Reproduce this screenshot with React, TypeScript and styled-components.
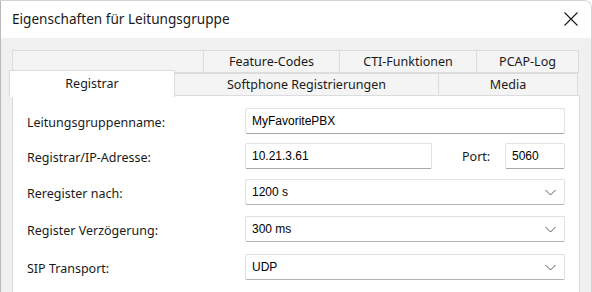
import styled, { createGlobalStyle } from "styled-components";

const GlobalStyle = createGlobalStyle`
    html, body {
        margin: 0;
        padding: 0;
        background: #ffffff;
    }
    body {
        font-family: "Noto Sans", "Open Sans", sans-serif;
        color: #1a1a1a;
    }
`;

const topTabs = [
    { label: "", w: 192 },
    { label: "Feature-Codes", w: 137 },
    { label: "CTI-Funktionen", w: 138 },
    { label: "PCAP-Log", w: 103 },
];

const bottomTabs = [
    { label: "Registrar", w: 163, active: true },
    { label: "Softphone Registrierungen", w: 265 },
    { label: "Media", w: 140 },
];

const Chevron = () => (
    <svg width="11" height="7" viewBox="0 0 11 7">
        <path d="M0.5 1 L5.5 6 L10.5 1" fill="none" stroke="#5c5c5c" strokeWidth="1" />
    </svg>
);

export default function App() {
    return (
        <>
            <GlobalStyle />
            <Window>
                <TitleBar>
                    <Title>Eigenschaften für Leitungsgruppe</Title>
                    <CloseBtn>
                        <svg width="14" height="14" viewBox="0 0 14 14">
                            <path d="M0.5 0.5 L13.5 13.5 M13.5 0.5 L0.5 13.5" stroke="#1a1a1a" strokeWidth="1.1" />
                        </svg>
                    </CloseBtn>
                </TitleBar>
                <DialogBody>
                    <TabStrip>
                        <TabRow>
                            {topTabs.map((t, i) => (
                                <Tab key={i} $w={t.w}>
                                    {t.label}
                                </Tab>
                            ))}
                        </TabRow>
                        <TabRow>
                            {bottomTabs.map((t) => (
                                <Tab key={t.label} $w={t.w} $active={t.active}>
                                    {t.label}
                                </Tab>
                            ))}
                        </TabRow>
                    </TabStrip>
                    <Panel>
                        <FormRow $mt={0}>
                            <FieldLabel>Leitungsgruppenname:</FieldLabel>
                            <TextBox $w={321}>MyFavoritePBX</TextBox>
                        </FormRow>
                        <FormRow $mt={9}>
                            <FieldLabel>Registrar/IP-Adresse:</FieldLabel>
                            <TextBox $w={187}>10.21.3.61</TextBox>
                            <PortLabel>Port:</PortLabel>
                            <TextBox $w={60}>5060</TextBox>
                        </FormRow>
                        <FormRow $mt={10}>
                            <FieldLabel>Reregister nach:</FieldLabel>
                            <ComboBox $w={321}>
                                <span>1200 s</span>
                                <Chevron />
                            </ComboBox>
                        </FormRow>
                        <FormRow $mt={11}>
                            <FieldLabel>Register Verzögerung:</FieldLabel>
                            <ComboBox $w={321}>
                                <span>300 ms</span>
                                <Chevron />
                            </ComboBox>
                        </FormRow>
                        <FormRow $mt={12}>
                            <FieldLabel>SIP Transport:</FieldLabel>
                            <ComboBox $w={321}>
                                <span>UDP</span>
                                <Chevron />
                            </ComboBox>
                        </FormRow>
                    </Panel>
                </DialogBody>
            </Window>
        </>
    );
}

const Window = styled.div`
    width: 592px;
    height: 292px;
    box-sizing: border-box;
    border-left: 1px solid #b9b9b9;
    border-top: 1px solid #d4d4d4;
    border-right: 1px solid #d4d4d4;
    border-top-right-radius: 8px;
    overflow: hidden;
    display: flex;
    flex-direction: column;
`;

const TitleBar = styled.div`
    height: 37px;
    flex: none;
    display: flex;
    align-items: center;
    justify-content: space-between;
    background: #ffffff;
    padding: 0 13px 0 11px;
`;

const Title = styled.div`
    font-size: 13.6px;
    color: #1a1a1a;
    margin-top: -2px;
`;

const CloseBtn = styled.div`
    display: flex;
    margin-top: -1px;
`;

const DialogBody = styled.div`
    flex: 1;
    background: #f0f0f0;
    padding: 12px 10px 0 11px;
    display: flex;
    flex-direction: column;
`;

const TabStrip = styled.div`
    display: flex;
    flex-direction: column;
    position: relative;
    z-index: 1;
`;

const TabRow = styled.div`
    display: flex;
    height: 23px;
`;

interface TabProps {
    $w: number;
    $active?: boolean;
}

const Tab = styled.div<TabProps>`
    box-sizing: border-box;
    width: ${({ $w, $active }) => ($active ? $w + 3 : $w)}px;
    margin-left: ${({ $active }) => ($active ? "-3px" : "0")};
    margin-top: ${({ $active }) => ($active ? "-3px" : "0")};
    margin-right: -1px;
    height: ${({ $active }) => ($active ? "27px" : "23px")};
    padding-bottom: ${({ $active }) => ($active ? "2px" : "0")};
    background: ${({ $active }) => ($active ? "#ffffff" : "#f4f4f4")};
    border: 1px solid #dcdcdc;
    border-bottom: ${({ $active }) => ($active ? "none" : "1px solid #dcdcdc")};
    display: flex;
    align-items: center;
    justify-content: center;
    font-size: 12.5px;
    color: #1a1a1a;
`;

const Panel = styled.div`
    flex: 1;
    background: #ffffff;
    border: 1px solid #dcdcdc;
    border-bottom: none;
    margin-top: -1px;
    margin-right: 1px;
    padding: 12px 14px 0 14px;
    display: flex;
    flex-direction: column;
`;

const FormRow = styled.div<{ $mt: number }>`
    display: flex;
    align-items: center;
    margin-top: ${({ $mt }) => $mt}px;
`;

const FieldLabel = styled.div`
    width: 218px;
    flex: none;
    font-size: 12.5px;
    color: #1a1a1a;
    padding-top: 2px;
`;

const PortLabel = styled.div`
    margin-left: 30px;
    width: 43px;
    font-size: 12.5px;
    color: #1a1a1a;
    padding-top: 1px;
`;

const TextBox = styled.div<{ $w: number }>`
    box-sizing: border-box;
    width: ${({ $w }) => $w}px;
    height: 26px;
    background: #ffffff;
    border: 1px solid #e2e2e2;
    border-bottom-color: #a8a8a8;
    border-radius: 2px;
    display: flex;
    align-items: center;
    padding-left: 6px;
    font-family: "Liberation Sans", Arial, sans-serif;
    font-size: 12px;
    color: #000000;
`;

const ComboBox = styled(TextBox)`
    justify-content: space-between;
    padding-right: 8px;
    border-color: #e0e0e0;
    border-bottom-color: #b4b4b4;
`;
